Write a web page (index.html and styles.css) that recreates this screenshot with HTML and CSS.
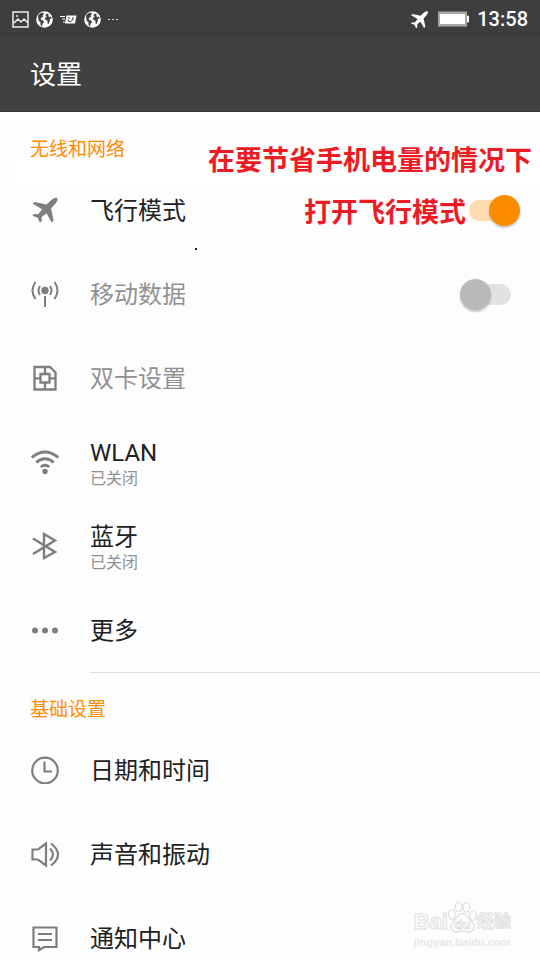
FILE: index.html
```html
<!DOCTYPE html>
<html lang="zh-CN">
<head>
<meta charset="utf-8">
<meta name="viewport" content="width=device-width, initial-scale=1">
<title>设置</title>
<link rel="stylesheet" href="styles.css">
</head>
<body>
<svg class="defs" aria-hidden="true">
  <symbol id="globe" viewBox="0 0 17 17">
    <circle cx="8.500" cy="8.500" r="8.300" fill="#fff"/>
    <path fill="#414141" d="M2 4.500 4 2.500 7 1.500 8 3 6.500 4 7.500 5.500 5.500 6.500 4.500 8.500 7 9.500 8 11 6.500 13 6 15.500 4.500 14 4.500 11.500 2.500 9.500zM11 2.500 13 3.500 12 5 13.500 6 15 5.500 15.500 8 13.500 7.500 14 9.500 12.500 13 11.500 12.500 11.500 9.500 9.500 9 9 7 10.500 5.500 9.500 4z"/>
  </symbol>
  <symbol id="plane" viewBox="0 0 28 28">
    <path fill="currentColor" d="M26.300 2c-1.500-.7-4.200.2-6.200 2.200l-4.600 4.300L3.500 6 1.700 7.800l9.500 5.400-4 5.100-4-.3-1.800 1.800 5.200 2 2.300 5 1.900-1.800-.2-4 4.900-3.800 5.200 9.300 1.900-1.900-2.500-12L24 8c2-2 3-4.500 2.300-6z"/>
  </symbol>
</svg>
<div class="screen">
  <header class="top">
    <div class="status">
      <svg class="status-icon" viewBox="0 0 17 17" fill="none" stroke="#eee" stroke-width="1.500"><path d="M1 1h15v15H1zM2 12l4-4 3 3 3-3 4 4"/><circle cx="5" cy="5" r="1" fill="#eee" stroke="none"/></svg>
      <svg class="status-icon"><use href="#globe"/></svg>
      <svg class="status-icon" viewBox="0 0 17 17"><path d="M0 5.500h5M2 8h3M3 11h2" stroke="#fff"/><path d="M6.500 4.500h10l-1.500 8H5z" fill="#fff"/><path d="M9 6v2M13 6v2M8 8.500q0 3 2.500 2t2.500-3" fill="none" stroke="#414141"/></svg>
      <svg class="status-icon"><use href="#globe"/></svg>
      <svg class="status-more" viewBox="0 0 10 17" fill="#ddd"><path d="M0 8h2v1H0zM4 8h2v1H4zM8 8h2v1H8z"/></svg>
      <svg class="status-plane"><use href="#plane"/></svg>
      <svg class="battery" viewBox="0 0 33 16"><path d="M1 .5h29v4h2v7h-2v4H1z" fill="#a8a8a8"/><path d="M3 3h25v10H3zM30 5h2v6h-2z" fill="#fff"/></svg>
      <span class="clock">13:58</span>
    </div>
    <h1 class="title">设置</h1>
  </header>

  <main>
    <section class="group">
      <h2 class="group-title">无线和网络</h2>
      <div class="row">
        <svg class="icon"><use href="#plane"/></svg>
        <label class="name" for="airplane">飞行模式</label>
        <input class="switch" type="checkbox" id="airplane" checked>
      </div>
      <div class="row disabled">
        <svg class="icon" viewBox="0 0 28 28" fill="none" stroke="currentColor" stroke-width="2"><circle cx="14" cy="10.500" r="3.700" fill="currentColor" stroke="none"/><path d="M14 16v11M9 6q-3 4.500 0 9M19 6q3 4.500 0 9M4.500 2q-6 8.500 0 17M23.500 2q6 8.500 0 17"/></svg>
        <label class="name" for="mobile">移动数据</label>
        <input class="switch" type="checkbox" id="mobile" disabled>
      </div>
      <div class="row disabled">
        <svg class="icon" viewBox="0 0 28 28" fill="none" stroke="currentColor" stroke-width="2.300"><path d="M3.500 3h15.500l5.500 5.500V25.500h-21zM9.500 10h9v8.500h-9zM14 3v7M14 18.500v7M3.500 14.300h6M18.500 14.300h6"/></svg>
        <span class="name">双卡设置</span>
      </div>
      <div class="row">
        <svg class="icon" viewBox="0 0 28 28" fill="none" stroke="currentColor" stroke-width="2.800"><path d="M.8 9.500q13.200-11 26.400 0M5.300 14.500q8.700-7.500 17.400 0M9.800 19q4.200-3.500 8.400 0"/><circle cx="14" cy="23.500" r="2.700" fill="currentColor" stroke="none"/></svg>
        <span class="name">WLAN<small class="state">已关闭</small></span>
      </div>
      <div class="row">
        <svg class="icon" viewBox="0 0 28 28" fill="none" stroke="currentColor" stroke-width="2.400"><path d="M2 6.500 24 20l-11 6V2l11 6.500L2 22"/></svg>
        <span class="name">蓝牙<small class="state">已关闭</small></span>
      </div>
      <div class="row">
        <svg class="icon" viewBox="0 0 28 28" fill="currentColor"><circle cx="4" cy="14.500" r="3"/><circle cx="14" cy="14.500" r="3"/><circle cx="24" cy="14.500" r="3"/></svg>
        <span class="name">更多</span>
      </div>
    </section>

    <section class="group next">
      <h2 class="group-title">基础设置</h2>
      <div class="row">
        <svg class="icon" viewBox="0 0 28 28" fill="none" stroke="currentColor" stroke-width="2.200"><circle cx="14" cy="14.500" r="12.800"/><path d="M13.500 5.500v10H21"/></svg>
        <span class="name">日期和时间</span>
      </div>
      <div class="row">
        <svg class="icon" viewBox="0 0 28 28" fill="none" stroke="currentColor" stroke-width="2.200"><path d="M1.500 9.500H7L15 3.500v22L7 19.500H1.500zM19 8.500q6 6 0 12M20 3.500q14 11 0 22"/></svg>
        <span class="name">声音和振动</span>
      </div>
      <div class="row">
        <svg class="icon" viewBox="0 0 28 28" fill="none" stroke="currentColor" stroke-width="2.200"><path d="M2.500 3.500h23v19.500H13l-5 3v-3H2.500zM7 10h14M7 16h14"/></svg>
        <span class="name">通知中心</span>
      </div>
    </section>
  </main>

  <div class="patch"></div>
  <p class="note note-first">在要节省手机电量的情况下</p>
  <p class="note note-second">打开飞行模式</p>
  <span class="speck"></span>

  <div class="watermark">
    <div class="brand">
      <span class="brand-name">Bai</span>
      <svg class="paw" viewBox="0 0 30 34" fill="#fdfdfd" stroke="#dedede" stroke-width="1.300"><ellipse cx="4" cy="14" rx="3.500" ry="5"/><ellipse cx="11" cy="6" rx="3.500" ry="5"/><ellipse cx="19" cy="6.500" rx="3.500" ry="5"/><ellipse cx="26" cy="15" rx="3.500" ry="5"/><path d="M15 13c5 0 6 5 10 9 4 5 1 10-4 10-3 0-3-1-6-1s-3 1-6 1c-5 0-8-5-4-10 4-4 5-9 10-9z"/><text class="paw-text" x="15" y="29" text-anchor="middle">du</text></svg>
      <span class="brand-cn">经验</span>
    </div>
    <div class="site">jingyan.baidu.com</div>
  </div>
</div>
</body>
</html>
```
FILE: styles.css
```css
* {
  box-sizing: border-box;
}

body {
  margin: 0;
  background: #fdfdfd;
  color: #212121;
  font-family: Roboto, "Noto Sans CJK SC", sans-serif;
}

h1, h2, p {
  margin: 0;
  font-weight: 400;
}

.defs {
  position: absolute;
  width: 0;
  height: 0;
}

.screen {
  position: relative;
  height: 100vh;
  overflow: hidden;
}

.top {
  background: #414141;
  border-bottom: 1px solid #363636;
  color: #fff;
}

.status {
  display: flex;
  align-items: center;
  gap: 7px;
  height: 38px;
  padding: 0 12px;
  background: #3e3e3e;
}

.status-icon {
  width: 17px;
  height: 17px;
}

.status-more {
  width: 10px;
  height: 17px;
}

.status-plane {
  width: 19px;
  height: 19px;
  margin-left: auto;
}

.battery {
  width: 33px;
  height: 16px;
  margin-left: 1px;
}

.clock {
  font-size: 20px;
  font-weight: 500;
  line-height: 24px;
}

.title {
  padding: 2px 30px 0;
  font-size: 26px;
  line-height: 71px;
}

.group-title {
  height: 56px;
  padding: 18px 30px 0;
  color: #ff8c00;
  font-size: 19px;
  line-height: 40px;
}

.next {
  position: relative;
}

.next::before {
  content: "";
  position: absolute;
  top: 0;
  right: 0;
  left: 90px;
  height: 1px;
  background: #dedede;
}

.row {
  display: flex;
  align-items: center;
  gap: 31px;
  height: 84px;
  padding: 0 29px 0 31px;
}

.icon {
  flex: none;
  width: 28px;
  height: 28px;
  color: #7e7e7e;
}

.name {
  flex: 1;
  padding-top: 2px;
  font-size: 24px;
  line-height: 32px;
}

.disabled .name {
  color: #919191;
}

.state {
  display: block;
  color: #919191;
  font-size: 16px;
  line-height: 20px;
}

.switch {
  position: relative;
  flex: none;
  width: 42px;
  height: 21px;
  margin: 0;
  border-radius: 11px;
  appearance: none;
  background: #e2e2e2;
}

.switch::before {
  content: "";
  position: absolute;
  top: -5px;
  left: -9px;
  width: 31px;
  height: 31px;
  border-radius: 50%;
  background: #b9b9b9;
  box-shadow: 0 2px 2px rgb(0 0 0 / 20%);
}

.switch:checked {
  background: #ffdcb0;
}

.switch:checked::before {
  left: 20px;
  background: #fb8c00;
}

.patch {
  position: absolute;
  top: 158px;
  right: 0;
  left: 10px;
  height: 31px;
  background: #fff;
}

.note {
  position: absolute;
  color: #ed1c24;
  font-size: 27px;
  font-weight: 700;
  line-height: 40px;
  white-space: nowrap;
}

.note-first {
  top: 141px;
  right: 8px;
}

.note-second {
  top: 193px;
  right: 74px;
}

.speck {
  position: absolute;
  top: 248px;
  left: 195px;
  width: 2px;
  height: 2px;
  background: #222;
}

.watermark {
  position: absolute;
  right: 29px;
  bottom: 10px;
  color: #fdfdfd;
  font-family: "Liberation Sans", "Noto Sans CJK SC", sans-serif;
  font-weight: 700;
  -webkit-text-stroke: 1px #e0e0e0;
}

.brand {
  display: flex;
  align-items: flex-end;
}

.brand-name {
  font-size: 22px;
  line-height: 24px;
}

.paw {
  width: 29px;
  height: 33px;
}

.paw-text {
  stroke-width: 1px;
  font-size: 14px;
}

.brand-cn {
  font-size: 17px;
  line-height: 24px;
}

.site {
  color: #e8e8e8;
  font-size: 11px;
  line-height: 16px;
  -webkit-text-stroke: 0;
}
```
